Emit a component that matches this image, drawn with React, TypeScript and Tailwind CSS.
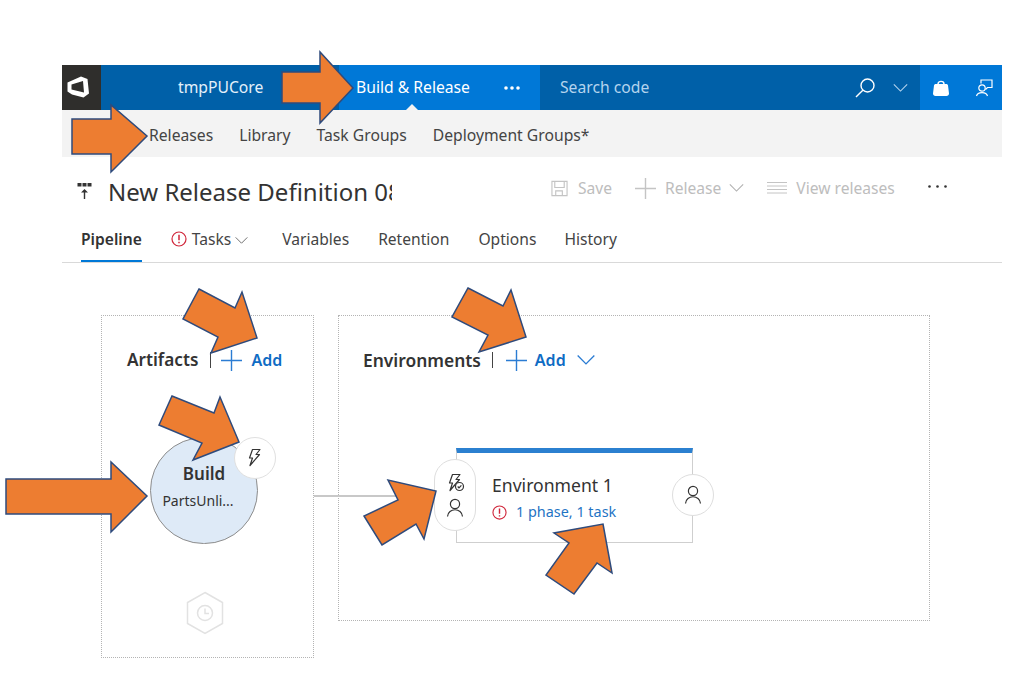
const font = 'font-["Noto_Sans","Open_Sans",sans-serif]'

const arrows = [
  '282,72 320,72 320,52 353,88 320,123 320,103 282,103',
  '72,119 111,119 111,105 147,136 111,172 111,154 72,154',
  '199,289 235,308 242,292 257,338 211,353 218,337 183,319',
  '172,396 214,413 220,397 239,442 193,460 202,443 159,425',
  '6,479 111,479 111,462 147,496 111,532 111,514 6,514',
  '468,288 503,306 511,290 526,337 479,352 488,335 452,317',
  '436,491 424,539 416,524 382,545 364,516 398,500 388,480',
  '603,524 612,573 597,563 574,594 546,575 569,543 554,533',
]

function Logo() {
  return (
    <svg viewBox="0 0 24 24" className="w-[24px] h-[24px]" fill="#fff" fillRule="evenodd">
      <path d="M1.5 7.5 L15 1.5 L21.5 4 L23 18.5 L17.5 22.5 L6 19.5 L1.5 16.5 Z M5.5 9.5 L17 6 L18 17.5 L5.5 14.5 Z" />
    </svg>
  )
}

function PlusIcon({ className }: { className: string }) {
  return (
    <svg viewBox="0 0 21 21" className={`w-[21px] h-[21px] shrink-0 ${className}`} fill="none" stroke="currentColor" strokeWidth="1.4">
      <path d="M10.5 0 V21 M0 10.5 H21" />
    </svg>
  )
}

function Chevron({ className }: { className: string }) {
  return (
    <svg viewBox="0 0 16 9" className={`shrink-0 ${className}`} fill="none" stroke="currentColor" strokeWidth="1.2">
      <path d="M0.5 0.5 L8 8 L15.5 0.5" />
    </svg>
  )
}

function UserIcon() {
  return (
    <svg viewBox="0 0 18 20" className="w-[18px] h-[20px]" fill="none" stroke="#333" strokeWidth="1.2">
      <circle cx="9" cy="6" r="4.6" />
      <path d="M1.5 18.5 C2 9.5 16 9.5 16.5 18.5" />
    </svg>
  )
}

function BoltIcon({ check }: { check?: boolean }) {
  return (
    <svg viewBox="0 0 20 20" className="w-[20px] h-[20px]" fill="none" stroke="#333" strokeWidth="1.2">
      <path d="M7.5 1.5 H15 L11 6.5 H14.5 L5 17.5 L7.5 10 H4.5 Z" strokeLinejoin="round" />
      {check && (
        <>
          <circle cx="14.5" cy="13.5" r="4" fill="#fff" />
          <path d="M12.7 13.5 L14 14.9 L16.4 12.3" />
        </>
      )}
    </svg>
  )
}

function ErrorIcon({ className }: { className: string }) {
  return (
    <svg viewBox="0 0 16 16" className={`shrink-0 ${className}`} fill="none" stroke="#d0263a" strokeWidth="1.2">
      <circle cx="8" cy="8" r="7" />
      <path d="M8 3.8 V9.2 M8 10.8 V12.2" strokeWidth="1.5" />
    </svg>
  )
}

export default function App() {
  return (
    <div className={`relative w-[1029px] h-[676px] overflow-hidden bg-white ${font}`}>
      <div className="ml-[62px] w-[940px] pt-[65px]">
        {/* top bar */}
        <header className="flex h-[45px] bg-[#0060a8] text-white text-[15.7px]">
          <div className="w-[39px] bg-[#2f2e2c] flex items-center justify-center pr-[8px] pb-[2px]">
            <Logo />
          </div>
          <div className="w-[238px] pl-[77px] flex items-center text-[#e4f0fa]">tmpPUCore</div>
          <div className="relative w-[201px] bg-[#0078d7] flex items-center pl-[17px] gap-[34px]">
            <span>Build &amp; Release</span>
            <svg viewBox="0 0 16 4" className="w-[16px] h-[4px]" fill="#fff">
              <circle cx="2" cy="2" r="1.8" />
              <circle cx="8" cy="2" r="1.8" />
              <circle cx="14" cy="2" r="1.8" />
            </svg>
            <span className="absolute left-[67px] bottom-0 w-0 h-0 border-x-[6px] border-x-transparent border-b-[6px] border-b-[#f3f3f3]" />
          </div>
          <div className="w-[380px] pl-[20px] pr-[12px] flex items-center text-[#b4d4ee]">
            <span>Search code</span>
            <svg viewBox="0 0 20 20" className="ml-auto w-[20px] h-[20px]" fill="none" stroke="#fff" strokeWidth="1.4">
              <circle cx="12.5" cy="7.5" r="6.5" />
              <path d="M7.8 12.2 L1 19" />
            </svg>
            <Chevron className="ml-[18px] w-[15px] h-[8px]" />
          </div>
          <div className="flex-1 bg-[#0078d7] flex items-center pl-[12px] gap-[25px]">
            <svg viewBox="0 0 18 18" className="w-[18px] h-[18px]" fill="#fff">
              <path d="M2 6.5 C2 5.5 3 5 4 5 H14 C15 5 16 5.5 16 6.5 L17 14.5 C17 16 16 17 14.5 17 H3.5 C2 17 1 16 1 14.5 Z" />
              <path d="M6 5 C6 1.5 12 1.5 12 5" fill="none" stroke="#fff" strokeWidth="1.4" />
            </svg>
            <svg viewBox="0 0 18 18" className="w-[18px] h-[18px]" fill="none" stroke="#fff" strokeWidth="1.2">
              <circle cx="7" cy="9" r="3.2" />
              <path d="M1.5 17 C2.5 12.5 11.5 12.5 12.5 17" />
              <path d="M6 4.5 V1 H17 V8.5 H12.5 L10.5 10.5" />
            </svg>
          </div>
        </header>

        {/* hub bar */}
        <nav className="flex items-center h-[47px] bg-[#f3f3f3] pl-[87px] gap-[26px] text-[15.7px] text-[#444] pt-[5px]">
          <span>Releases</span>
          <span>Library</span>
          <span>Task Groups</span>
          <span>Deployment Groups*</span>
        </nav>

        {/* title row */}
        <div className="flex items-center h-[63px] pl-[14px] pt-[6px]">
          <svg viewBox="0 0 16 20" className="w-[17px] h-[20px] shrink-0" fill="#333">
            <rect x="1" y="1" width="4" height="3.5" />
            <rect x="6" y="1" width="4" height="3.5" />
            <rect x="11" y="1" width="4" height="3.5" />
            <path d="M8 7 L11.5 10.5 H8.7 V17 H7.3 V10.5 H4.5 Z" />
          </svg>
          <h1 className="ml-[15px] w-[284px] overflow-hidden whitespace-nowrap text-[24px] font-normal text-[#333]">
            New Release Definition 08
          </h1>
          <div className="flex items-center ml-[159px] -mt-[6px] text-[15.6px] text-[#bdbdbd]">
            <svg viewBox="0 0 18 18" className="w-[17px] h-[17px]" fill="none" stroke="#c4c4c4" strokeWidth="1.2">
              <path d="M1 1.5 H17 V16.5 H1 Z M4 1.5 V8 H14 V1.5 M5 16.5 V11.5 H12 V16.5" />
            </svg>
            <span className="ml-[10px]">Save</span>
            <PlusIcon className="ml-[23px] text-[#c4c4c4]" />
            <span className="ml-[9px]">Release</span>
            <Chevron className="ml-[8px] w-[15px] h-[8px] text-[#b0b0b0]" />
            <svg viewBox="0 0 20 14" className="ml-[23px] w-[20px] h-[14px]" stroke="#c4c4c4" strokeWidth="1">
              <path d="M0 1.5 H20 M0 5 H20 M0 8.5 H20 M0 12 H20" />
            </svg>
            <span className="ml-[9px]">View releases</span>
            <svg viewBox="0 0 19 3" className="ml-[33px] w-[19px] h-[3px] -mt-[3px]" fill="#333">
              <circle cx="1.5" cy="1.5" r="1.3" />
              <circle cx="9.5" cy="1.5" r="1.3" />
              <circle cx="17.5" cy="1.5" r="1.3" />
            </svg>
          </div>
        </div>

        {/* tabs */}
        <div className="flex items-stretch h-[43px] pl-[19px] border-b border-[#d9d9d9] text-[15.6px] text-[#444]">
          <span className="flex items-center pb-[1px] font-semibold text-[#333] border-b-2 border-[#0078d7]">Pipeline</span>
          <span className="ml-[29px] pb-[3px] flex items-center">
            <ErrorIcon className="w-[16px] h-[16px] -mt-[2px]" />
            <span className="ml-[5px]">Tasks</span>
            <Chevron className="ml-[4px] mt-[2px] w-[13px] h-[7px] text-[#666]" />
          </span>
          <span className="ml-[34px] pb-[3px] flex items-center">Variables</span>
          <span className="ml-[29px] pb-[3px] flex items-center">Retention</span>
          <span className="ml-[29px] pb-[3px] flex items-center">Options</span>
          <span className="ml-[28px] pb-[3px] flex items-center">History</span>
        </div>

        {/* pipeline canvas */}
        <div className="flex mt-[52px] ml-[39px] gap-[24px]">
          <section className="relative w-[213px] h-[343px] border border-dotted border-[#b4b4b4] flex flex-col">
            <div className="flex items-center mt-[32px] pl-[25px] h-[24px] text-[#0f6cc4]">
              <span className="text-[17.2px] font-semibold text-[#333]">Artifacts</span>
              <span className="ml-[12px] w-px h-[16px] bg-[#444]" />
              <PlusIcon className="ml-[10px] text-[#2b7cd3]" />
              <span className="ml-[9px] text-[16px] font-semibold">Add</span>
            </div>
            <div className="relative ml-[48px] mt-[65px] w-[108px] h-[107px] rounded-full bg-[#deeaf7] border-[1.5px] border-[#8c8c8c] flex flex-col items-center pt-[24px]">
              <span className="text-[17px] font-semibold text-[#333] leading-[24px]">Build</span>
              <span className="mt-[5px] pr-[12px] text-[14px] text-[#333] leading-[20px]">PartsUnli...</span>
              <span className="absolute -top-px right-[-19px] w-[42px] h-[42px] rounded-full bg-white border border-[#e0e0e0] flex items-center justify-center">
                <BoltIcon />
              </span>
            </div>
            <div className="mt-[47px] ml-[83px] w-[40px] h-[44px]">
              <svg viewBox="0 0 40 44" className="w-[40px] h-[44px]" fill="none" stroke="#e2e2e2" strokeWidth="1.5">
                <path d="M20 1.5 L37.5 11.5 V32.5 L20 42.5 L2.5 32.5 V11.5 Z" />
                <circle cx="20" cy="22" r="7.5" />
                <path d="M20 17.5 V22.5 H24" />
              </svg>
            </div>
          </section>

          <section className="relative w-[592px] h-[306px] border border-dotted border-[#b4b4b4]">
            <div className="flex items-center mt-[32px] pl-[24px] h-[24px] text-[#0f6cc4]">
              <span className="text-[17.4px] font-semibold text-[#333]">Environments</span>
              <span className="ml-[11px] w-px h-[16px] bg-[#444]" />
              <PlusIcon className="ml-[13px] text-[#2b7cd3]" />
              <span className="ml-[8px] text-[16px] font-semibold">Add</span>
              <Chevron className="ml-[11px] w-[18px] h-[10px] text-[#2b7cd3]" />
            </div>
            <div className="relative ml-[117px] mt-[76px] w-[237px] h-[95px] bg-white border-x border-b border-[#cfcfcf] border-t-[5px] border-t-[#2b80d0] flex flex-col pl-[35px] pt-[20px]">
              <span className="text-[17.6px] text-[#333] leading-[24px]">Environment 1</span>
              <span className="flex items-center mt-[5px] text-[14.4px] text-[#1f74c4] leading-[20px]">
                <ErrorIcon className="w-[15px] h-[15px]" />
                <span className="ml-[9px]">1 phase, 1 task</span>
              </span>
              <div className="absolute left-[-23px] top-[6px] w-[42px] h-[72px] rounded-full bg-white border border-[#dedede] flex flex-col items-center justify-center gap-[5px]">
                <BoltIcon check />
                <UserIcon />
              </div>
              <div className="absolute right-[-22px] top-[21px] w-[42px] h-[42px] rounded-full bg-white border border-[#dedede] flex items-center justify-center">
                <UserIcon />
              </div>
            </div>
            <span className="absolute left-[-25px] top-[179px] w-[97px] h-[2px] bg-[#c8c8c8]" />
          </section>
        </div>
      </div>

      {/* callout arrows */}
      <svg viewBox="0 0 1029 676" className="absolute inset-0 w-[1029px] h-[676px] pointer-events-none">
        {arrows.map((points) => (
          <polygon key={points} points={points} fill="#ed7d31" stroke="#2f4b7c" strokeWidth="1.5" />
        ))}
      </svg>
    </div>
  )
}
